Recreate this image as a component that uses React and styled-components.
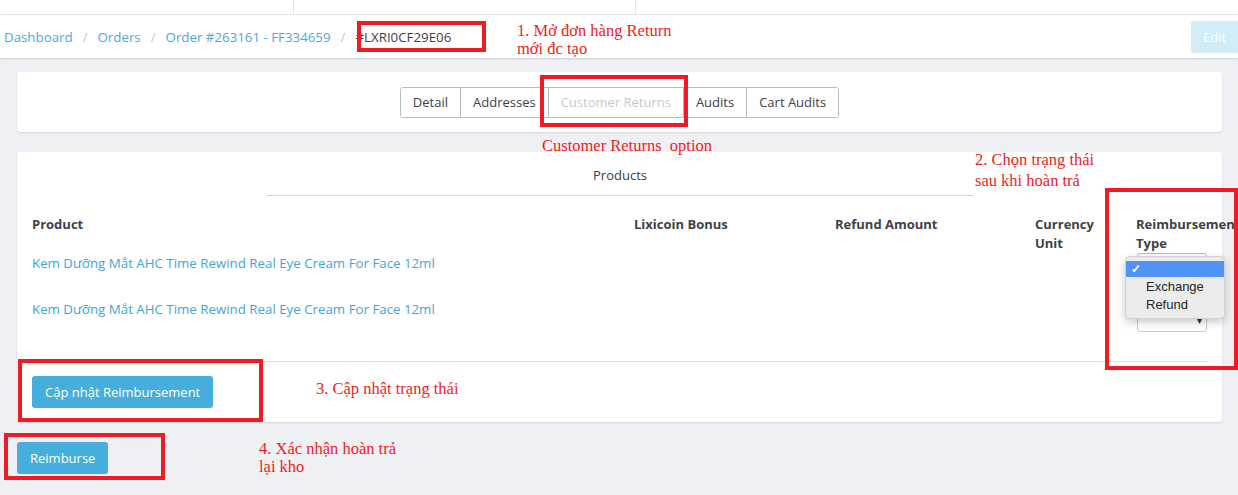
import React from "react";
import styled, { createGlobalStyle } from "styled-components";

const columns = "602px 201px 200px 101px 72px";

const products = [
  { id: 1, name: "Kem Dưỡng Mắt AHC Time Rewind Real Eye Cream For Face 12ml", selectOffset: 0, focused: true },
  { id: 2, name: "Kem Dưỡng Mắt AHC Time Rewind Real Eye Cream For Face 12ml", selectOffset: 11, focused: false },
];

const tabs = [
  { label: "Detail" },
  { label: "Addresses" },
  { label: "Customer Returns", active: true },
  { label: "Audits" },
  { label: "Cart Audits" },
];

const crumbs = ["Dashboard", "Orders", "Order #263161 - FF334659"];

const App = () => {
  return (
    <Page>
      <GlobalStyle />
      <TopStrip>
        <StripCell $w={293} />
        <StripCell $w={342} />
        <StripCell $w={603} $last />
      </TopStrip>

      <Header>
        <Breadcrumb>
          {crumbs.map((c) => (
            <React.Fragment key={c}>
              <CrumbLink>{c}</CrumbLink>
              <Sep>/</Sep>
            </React.Fragment>
          ))}
          <CrumbCurrent>#LXRI0CF29E06</CrumbCurrent>
        </Breadcrumb>
        <EditButton>Edit</EditButton>
      </Header>

      <Main>
        <TabsCard>
          <TabGroup>
            {tabs.map((t) => (
              <TabButton key={t.label} $active={t.active}>
                {t.label}
              </TabButton>
            ))}
          </TabGroup>
        </TabsCard>

        <ProductsCard>
          <SectionTab>Products</SectionTab>
          <HeadRow>
            <HeadCell>Product</HeadCell>
            <HeadCell>Lixicoin Bonus</HeadCell>
            <HeadCell>Refund Amount</HeadCell>
            <HeadCell>Currency Unit</HeadCell>
            <HeadCell>Reimbursement Type</HeadCell>
          </HeadRow>
          {products.map((p, i) => (
            <BodyRow key={p.id}>
              <ProductLink>{p.name}</ProductLink>
              <Cell />
              <Cell />
              <Cell />
              <SelectCell>
                <SelectBox $offset={p.selectOffset} $focused={p.focused}>
                  <Arrow>▾</Arrow>
                </SelectBox>
                {i === 0 && (
                  <Dropdown>
                    <Option $selected $first>
                      <Check>✓</Check>
                    </Option>
                    <Option>
                      <Check />
                      Exchange
                    </Option>
                    <Option>
                      <Check />
                      Refund
                    </Option>
                  </Dropdown>
                )}
              </SelectCell>
            </BodyRow>
          ))}
          <FooterBar>
            <PrimaryButton>Cập nhật Reimbursement</PrimaryButton>
          </FooterBar>
        </ProductsCard>

        <BottomBar>
          <PrimaryButton>Reimburse</PrimaryButton>
        </BottomBar>
      </Main>

      {/* annotation overlay */}
      <RedBox $x={357} $y={21} $w={129} $h={31} />
      <Note $x={517} $y={22}>
        1. Mở đơn hàng Return
        <br />
        mới đc tạo
      </Note>
      <RedBox $x={540} $y={75} $w={148} $h={52} />
      <Note $x={542} $y={137}>{"Customer Returns  option"}</Note>
      <Note $x={975} $y={149} $lh={21}>
        2. Chọn trạng thái
        <br />
        sau khi hoàn trả
      </Note>
      <RedBox $x={1105} $y={188} $w={133} $h={182} />
      <RedBox $x={18} $y={359} $w={245} $h={63} />
      <Note $x={316} $y={380}>3. Cập nhật trạng thái</Note>
      <RedBox $x={4} $y={433} $w={161} $h={47} />
      <Note $x={259} $y={440}>
        4. Xác nhận hoàn trả
        <br />
        lại kho
      </Note>
    </Page>
  );
};

const GlobalStyle = createGlobalStyle`
  html, body {
    margin: 0;
    padding: 0;
  }
  body {
    background: #eff0f4;
    font-family: "Open Sans", "Noto Sans", sans-serif;
    color: #3d4148;
    overflow: hidden;
  }
`;

const Page = styled.div`
  position: relative;
  width: 1238px;
  height: 495px;
  overflow: hidden;
`;

const TopStrip = styled.div`
  display: flex;
  height: 14px;
  background: #fff;
  border-bottom: 1px solid #e6e7e9;
`;

const StripCell = styled.div`
  position: relative;
  width: ${(p) => p.$w}px;
  border-right: ${(p) => (p.$last ? "none" : "1px solid #e3e4e6")};

  &::after {
    content: "";
    display: ${(p) => (p.$last ? "none" : "block")};
    position: absolute;
    right: -1px;
    bottom: -7px;
    width: 1px;
    height: 7px;
    background: #e3e4e6;
  }
`;

const Header = styled.div`
  position: relative;
  z-index: 1;
  display: flex;
  align-items: center;
  justify-content: space-between;
  height: 43px;
  background: #fff;
  box-shadow: 0 1px 2px rgba(0, 0, 0, 0.14);
`;

const Breadcrumb = styled.div`
  display: flex;
  align-items: center;
  padding-left: 4px;
  font-size: 13.3px;
`;

const CrumbLink = styled.span`
  color: #4ea7dc;
`;

const Sep = styled.span`
  color: #c4c7cb;
  margin: 0 10px;
`;

const CrumbCurrent = styled.span`
  color: #3d4148;
`;

const EditButton = styled.button`
  height: 32px;
  padding: 0 12px;
  border: none;
  border-radius: 3px 0 0 3px;
  background: #d2ecf6;
  color: #fff;
  font-family: inherit;
  font-size: 13px;
`;

const Main = styled.div`
  padding: 14px 16px 20px 17px;
`;

const Card = styled.div`
  background: #fff;
  border-radius: 4px;
  box-shadow: 0 1px 2px rgba(0, 0, 0, 0.12);
`;

const TabsCard = styled(Card)`
  display: flex;
  align-items: center;
  justify-content: center;
  height: 60px;
`;

const TabGroup = styled.div`
  display: inline-flex;
  border: 1px solid #b8bcc2;
  border-radius: 3px;
  overflow: hidden;
`;

const TabButton = styled.div`
  display: flex;
  align-items: center;
  height: 29px;
  padding: 0 12px;
  font-size: 13px;
  color: ${(p) => (p.$active ? "#c6c9cd" : "#3d4148")};
  background: #fff;

  & + & {
    border-left: 1px solid #b8bcc2;
  }
`;

const ProductsCard = styled(Card)`
  margin-top: 20px;
  padding: 13px 14px 14px 15px;
`;

const SectionTab = styled.div`
  width: 706px;
  margin: 0 auto;
  padding-bottom: 10px;
  border-bottom: 1px solid #d2d3d6;
  text-align: center;
  font-size: 13px;
  line-height: 20px;
`;

const HeadRow = styled.div`
  display: grid;
  grid-template-columns: ${columns};
  margin-top: 19px;
  height: 38px;
`;

const HeadCell = styled.div`
  padding-right: 15px;
  font-size: 13px;
  font-weight: 700;
  line-height: 19px;
  white-space: normal;
`;

const BodyRow = styled.div`
  display: grid;
  grid-template-columns: ${columns};
  align-items: start;
  height: 46px;
`;

const Cell = styled.div``;

const ProductLink = styled.a`
  font-size: 13.3px;
  line-height: 20px;
  color: #3fa5da;
  cursor: pointer;
`;

const SelectCell = styled.div`
  position: relative;
`;

const SelectBox = styled.div`
  position: relative;
  box-sizing: border-box;
  width: 70px;
  height: 22px;
  margin: ${(p) => p.$offset}px 0 0 1px;
  border: 1px solid ${(p) => (p.$focused ? "#8ccbe9" : "#c9ccd0")};
  border-radius: 3px;
  background: #fff;
`;

const Arrow = styled.span`
  position: absolute;
  right: 4px;
  top: 2px;
  font-size: 10px;
  color: #333;
`;

const Dropdown = styled.div`
  position: absolute;
  left: -11px;
  top: 3px;
  z-index: 2;
  width: 100px;
  padding: 4px 0 5px;
  box-sizing: border-box;
  background: #ececec;
  border: 1px solid #d2d2d2;
  border-radius: 5px;
  box-shadow: 0 3px 8px rgba(0, 0, 0, 0.22);
  font-family: "Liberation Sans", Arial, sans-serif;
  font-size: 13px;
  color: #262626;
`;

const Option = styled.div`
  display: flex;
  align-items: center;
  height: ${(p) => (p.$first ? 16 : 18)}px;
  background: ${(p) => (p.$selected ? "#5193f5" : "transparent")};
  color: ${(p) => (p.$selected ? "#fff" : "#262626")};
`;

const Check = styled.span`
  display: inline-block;
  width: 20px;
  padding-left: 5px;
  box-sizing: border-box;
  font-size: 12px;
  font-weight: 700;
`;

const FooterBar = styled.div`
  margin-top: 16px;
  padding-top: 14px;
  border-top: 1px solid #dcdde0;
`;

const PrimaryButton = styled.button`
  height: 32px;
  padding: 0 13px;
  border: none;
  border-radius: 3px;
  background: #45aedc;
  color: #fff;
  font-family: inherit;
  font-size: 13px;
`;

const BottomBar = styled.div`
  margin-top: 20px;
`;

const RedBox = styled.div`
  position: absolute;
  left: ${(p) => p.$x}px;
  top: ${(p) => p.$y}px;
  width: ${(p) => p.$w}px;
  height: ${(p) => p.$h}px;
  box-sizing: border-box;
  border: 4px solid #ed1c24;
  z-index: 5;
  pointer-events: none;
`;

const Note = styled.div`
  position: absolute;
  left: ${(p) => p.$x}px;
  top: ${(p) => p.$y}px;
  z-index: 5;
  font-family: "Liberation Serif", "Times New Roman", serif;
  font-size: 16.5px;
  line-height: ${(p) => p.$lh || 18}px;
  color: #ed1c24;
  white-space: pre;
`;

export default App;
